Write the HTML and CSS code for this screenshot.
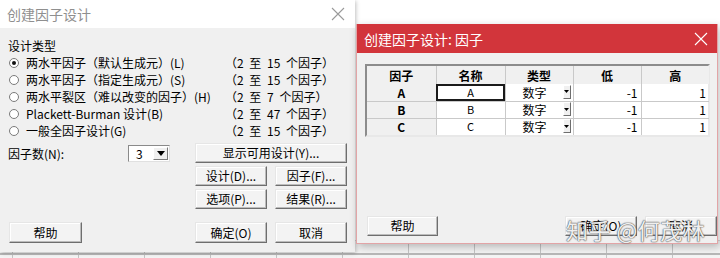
FILE: index.html
```html
<!DOCTYPE html>
<html lang="zh-CN">
<head>
    <meta charset="UTF-8">
    <title>创建因子设计</title>
    <link rel="stylesheet" href="styles.css">
</head>
<body>
    <div id="desktop">
        <div class="sheet"></div>

        <!-- main dialog (inactive) -->
        <div class="dialog dialog-main">
            <div class="titlebar">
                <span class="title">创建因子设计</span>
                <span class="close">
                    <svg width="14" height="14" viewBox="0 0 14 14"><path d="M1 1L13 13M13 1L1 13" stroke="#9a9a9a" stroke-width="1.1" fill="none"/></svg>
                </span>
            </div>
            <div class="dialog-body">
                <div class="group-label">设计类型</div>
                <ul class="radio-list">
                    <li><span class="radio checked"></span><span class="opt">两水平因子（默认生成元）(L)</span><span class="range">（2 至 15 个因子）</span></li>
                    <li><span class="radio"></span><span class="opt">两水平因子（指定生成元）(S)</span><span class="range">（2 至 15 个因子）</span></li>
                    <li><span class="radio"></span><span class="opt">两水平裂区（难以改变的因子）(H)</span><span class="range">（2 至 7 个因子）</span></li>
                    <li><span class="radio"></span><span class="opt">Plackett-Burman 设计(B)</span><span class="range">（2 至 47 个因子）</span></li>
                    <li><span class="radio"></span><span class="opt">一般全因子设计(G)</span><span class="range">（2 至 15 个因子）</span></li>
                </ul>
                <div class="controls">
                    <div class="factor-count">
                        <span class="count-label">因子数(N):</span>
                        <span class="select">
                            <span class="select-value">3</span>
                            <span class="select-btn"><svg width="8" height="5" viewBox="0 0 8 5"><path d="M0 0H8L4 5Z" fill="#000"/></svg></span>
                        </span>
                    </div>
                    <button class="btn wide">显示可用设计(Y)...</button>
                    <button class="btn c2">设计(D)...</button>
                    <button class="btn c3">因子(F)...</button>
                    <button class="btn c2">选项(P)...</button>
                    <button class="btn c3">结果(R)...</button>
                </div>
                <div class="footer">
                    <button class="btn help">帮助</button>
                    <button class="btn c2">确定(O)</button>
                    <button class="btn c3">取消</button>
                </div>
            </div>
        </div>

        <!-- factor dialog (active) -->
        <div class="dialog dialog-factors">
            <div class="titlebar active">
                <span class="title">创建因子设计: 因子</span>
                <span class="close">
                    <svg width="14" height="14" viewBox="0 0 14 14"><path d="M1 1L13 13M13 1L1 13" stroke="#fff" stroke-width="1.1" fill="none"/></svg>
                </span>
            </div>
            <div class="dialog-body">
                <div class="grid-frame">
                    <table class="factor-table">
                        <thead>
                            <tr><th>因子</th><th>名称</th><th>类型</th><th>低</th><th>高</th></tr>
                        </thead>
                        <tbody>
                            <tr>
                                <th>A</th>
                                <td class="name focus">A</td>
                                <td class="type"><span>数字</span><span class="mini-drop"><svg width="5" height="3" viewBox="0 0 5 3"><path d="M0 0H5L2.5 3Z" fill="#000"/></svg></span></td>
                                <td class="num">-1</td>
                                <td class="num">1</td>
                            </tr>
                            <tr>
                                <th>B</th>
                                <td class="name">B</td>
                                <td class="type"><span>数字</span><span class="mini-drop"><svg width="5" height="3" viewBox="0 0 5 3"><path d="M0 0H5L2.5 3Z" fill="#000"/></svg></span></td>
                                <td class="num">-1</td>
                                <td class="num">1</td>
                            </tr>
                            <tr>
                                <th>C</th>
                                <td class="name">C</td>
                                <td class="type"><span>数字</span><span class="mini-drop"><svg width="5" height="3" viewBox="0 0 5 3"><path d="M0 0H5L2.5 3Z" fill="#000"/></svg></span></td>
                                <td class="num">-1</td>
                                <td class="num">1</td>
                            </tr>
                        </tbody>
                    </table>
                </div>
                <div class="footer-factors">
                    <button class="btn help">帮助</button>
                    <span class="spacer"></span>
                    <button class="btn">确定(O)</button>
                    <button class="btn">取消</button>
                </div>
            </div>
        </div>

        <div class="watermark">知乎 @何茂林</div>
    </div>
</body>
</html>
```

FILE: styles.css
```css
* {
    box-sizing: border-box;
}
body {
    margin: 0;
    font-family: "Noto Sans CJK SC", "Liberation Sans", sans-serif;
    font-size: 12px;
    color: #000000;
    background-color: #ffffff;
    overflow: hidden;
}
#desktop {
    position: relative;
    width: 720px;
    height: 258px;
}
.sheet {
    position: absolute;
    left: 0;
    top: 240px;
    width: 720px;
    height: 18px;
    background-color: #f4f4f4;
    border-top: 1px solid #d8d8d8;
    background-image:
        linear-gradient(#b8b8b8, #b8b8b8),
        repeating-linear-gradient(90deg, transparent 0, transparent 12px, #c4c4c4 12px, #c4c4c4 13px, transparent 13px, transparent 66px);
    background-size: 720px 2px, 720px 18px;
    background-position: 0 12px, 0 0;
    background-repeat: no-repeat;
}
.dialog {
    position: absolute;
    background-color: #f0f0f0;
}
.dialog-main {
    left: 0;
    top: 0;
    width: 355px;
    height: 252px;
    box-shadow: 1px 1px 4px rgba(0, 0, 0, 0.25);
}
.dialog-factors {
    left: 356px;
    top: 24px;
    width: 362px;
    height: 220px;
    border: 1px solid #e2a4a6;
    border-top: none;
    box-shadow: 2px 3px 8px rgba(0, 0, 0, 0.25);
}
.titlebar {
    height: 28px;
    background-color: #ffffff;
    display: flex;
    align-items: center;
    justify-content: space-between;
    padding: 0 9px 0 7px;
}
.titlebar .title {
    font-size: 14px;
    color: #8f8f8f;
}
.titlebar .close {
    display: flex;
    margin-right: 1px;
}
.titlebar.active {
    height: 29px;
    background-color: #d2353b;
    padding: 0 8px 0 7px;
}
.titlebar.active .title {
    color: #ffffff;
}

/* main dialog body */
.dialog-main .dialog-body {
    padding: 9px 0 0 8px;
}
.group-label {
    height: 17px;
    line-height: 17px;
}
.radio-list {
    list-style: none;
    margin: 0;
    padding: 0;
}
.radio-list li {
    display: flex;
    align-items: center;
    height: 17px;
    line-height: 17px;
    white-space: nowrap;
}
.radio {
    width: 10px;
    height: 10px;
    border-radius: 50%;
    border: 1px solid #7a7a7a;
    background-color: #ffffff;
    margin: 0 7px 0 1px;
    display: flex;
    align-items: center;
    justify-content: center;
}
.radio.checked::after {
    content: "";
    width: 4px;
    height: 4px;
    border-radius: 50%;
    background-color: #111111;
}
.opt {
    width: 199px;
}
.range {
    word-spacing: 3px;
}
.controls {
    display: grid;
    grid-template-columns: 179px 72px 72px;
    grid-auto-rows: 20px;
    column-gap: 8px;
    row-gap: 3px;
    margin-top: 4px;
}
.factor-count {
    display: flex;
    align-items: center;
    grid-row: 1;
}
.count-label {
    width: 120px;
}
.select {
    display: flex;
    align-items: center;
    width: 42px;
    height: 17px;
    background-color: #ffffff;
    border: 1px solid;
    border-color: #8a8a8a #e0e0e0 #e0e0e0 #8a8a8a;
}
.select-value {
    flex: 1;
    padding-left: 7px;
    line-height: 15px;
}
.select-btn {
    width: 15px;
    height: 13px;
    margin-right: 1px;
    display: flex;
    align-items: center;
    justify-content: center;
    background-color: #f0f0f0;
    border: 1px solid;
    border-color: #ffffff #7a7a7a #7a7a7a #ffffff;
}
.btn {
    font-family: inherit;
    font-size: 12px;
    color: #000000;
    background-color: #f3f3f3;
    border: 1px solid;
    border-color: #e6e6e6 #6e6e6e #6e6e6e #e6e6e6;
    box-shadow: inset -1px -1px 0 #bcbcbc, inset 1px 1px 0 #ffffff;
    padding: 0;
    height: 20px;
    line-height: 18px;
    white-space: nowrap;
}
.btn.wide {
    grid-column: 2 / 4;
}
.btn.c2 {
    grid-column: 2;
}
.btn.c3 {
    grid-column: 3;
}
.footer {
    display: grid;
    grid-template-columns: 179px 72px 72px;
    column-gap: 8px;
    margin-top: 13px;
    height: 21px;
}
.footer .btn {
    height: 21px;
}
.footer .help {
    width: 73px;
    margin-left: 1px;
}

/* factor dialog body */
.dialog-factors .dialog-body {
    padding: 11px 0 0 8px;
}
.grid-frame {
    width: 345px;
    border: 2px solid;
    border-color: #8c8c8c #e8e8e8 #e8e8e8 #8c8c8c;
    background-color: #ffffff;
}
.factor-table {
    border-collapse: collapse;
    table-layout: fixed;
    width: 341px;
}
.factor-table th,
.factor-table td {
    border: 1px solid #c9c9c9;
    padding: 0 3px;
    height: 17px;
    line-height: 15px;
    font-weight: normal;
    white-space: nowrap;
}
.factor-table thead th {
    height: 18px;
    background-color: #f0f0f0;
    font-weight: bold;
    text-align: center;
    width: 68px;
}
.factor-table thead th:first-child,
.factor-table thead th:nth-child(2) {
    width: 69px;
}
.factor-table tbody th {
    background-color: #f0f0f0;
    font-weight: bold;
    text-align: center;
}
.factor-table tr:first-child th,
.factor-table tr:first-child td {
    border-top: none;
}
.factor-table tr:last-child th,
.factor-table tr:last-child td {
    border-bottom: none;
}
.factor-table th:first-child {
    border-left: none;
}
.factor-table td:last-child,
.factor-table th:last-child {
    border-right: none;
}
.factor-table td.name {
    text-align: center;
    font-size: 11px;
}
.factor-table td.focus {
    outline: 2px solid #1a1a1a;
    outline-offset: -2px;
}
.factor-table td.type {
    padding: 0 2px 0 17px;
}
.mini-drop {
    float: right;
    width: 8px;
    height: 14px;
    display: flex;
    align-items: center;
    justify-content: center;
    background-color: #f0f0f0;
    border: 1px solid;
    border-color: #ffffff #6e6e6e #6e6e6e #ffffff;
}
.factor-table td.num {
    text-align: right;
    padding-right: 3px;
}
.footer-factors {
    display: flex;
    gap: 8px;
    width: 352px;
    margin-top: 79px;
    padding-left: 2px;
    height: 20px;
}
.footer-factors .btn {
    width: 72px;
    height: 20px;
}
.footer-factors .help {
    width: 71px;
}
.spacer {
    flex: 1;
}

.watermark {
    position: absolute;
    left: 566px;
    top: 215px;
    font-size: 22px;
    line-height: 28px;
    color: rgba(255, 255, 255, 0.92);
    letter-spacing: 0.5px;
    text-shadow: 0 0 1px #5a5a5a, 0 0 1px #5a5a5a, 0 0 2px rgba(0, 0, 0, 0.4);
    white-space: nowrap;
}
```
